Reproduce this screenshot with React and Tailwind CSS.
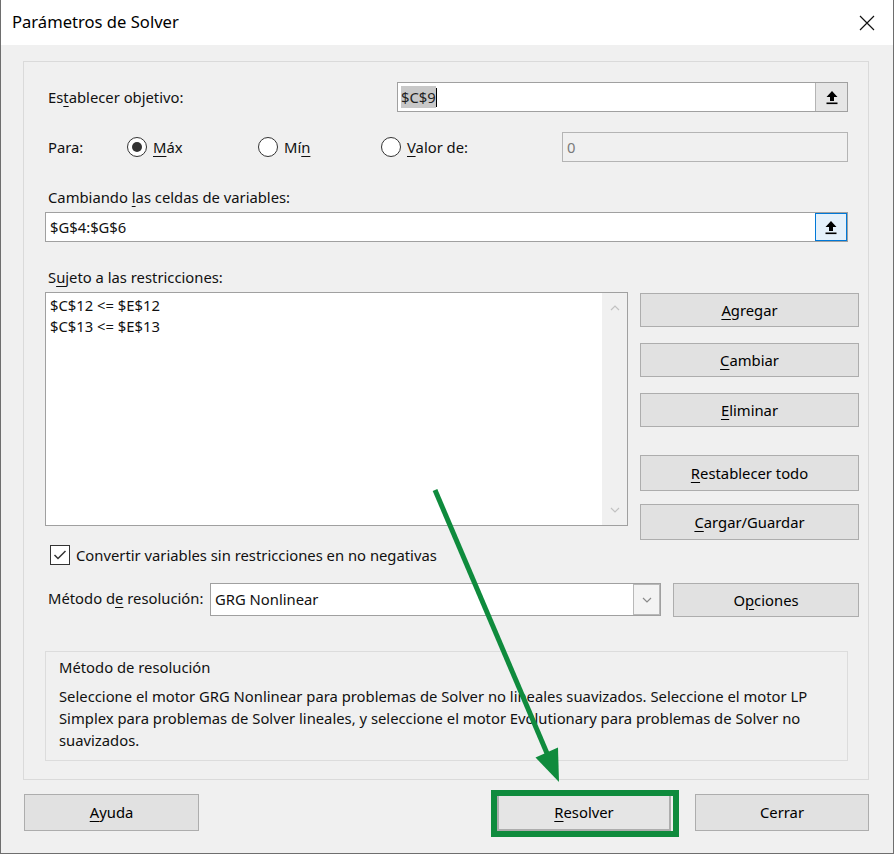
import React from "react";

function U({ children }) {
  return <span className="underline underline-offset-[3px] decoration-1">{children}</span>;
}

function Btn({ className = "", children }) {
  return (
    <div className={"shrink-0 flex items-center justify-center bg-[#e1e1e1] border border-[#adadad] text-black " + className}>
      {children}
    </div>
  );
}

function RefIcon() {
  return (
    <svg width="12" height="15" viewBox="0 0 12 15">
      <path d="M6 1 L11.5 7 L8 7 L8 11 L4 11 L4 7 L0.5 7 Z" fill="#000" />
      <rect x="0.5" y="12.5" width="11" height="1.6" fill="#000" />
    </svg>
  );
}

function Radio({ checked }) {
  return (
    <div className="shrink-0 w-[20px] h-[20px] rounded-full border-[1.5px] border-[#333] bg-white flex items-center justify-center">
      {checked && <div className="w-[10px] h-[10px] rounded-full bg-[#333]" />}
    </div>
  );
}

function Chevron({ dir = "down", color = "#9a9a9a" }) {
  return (
    <svg width="10" height="6" viewBox="0 0 10 6">
      <polyline
        points={dir === "down" ? "1,1 5,5 9,1" : "1,5 5,1 9,5"}
        fill="none"
        stroke={color}
        strokeWidth="1.2"
      />
    </svg>
  );
}

export default function App() {
  return (
    <div className="relative w-[894px] h-[854px] bg-[#f0f0f0] border-x border-b border-[#6e6e6e] font-['Noto_Sans',sans-serif] text-[14.8px] text-[#111] overflow-hidden">
      {/* title bar */}
      <div className="h-[45px] bg-white flex items-center justify-between pl-[11px] pr-[18px]">
        <span className="text-[16.6px] text-black">Parámetros de Solver</span>
        <svg width="16" height="16" viewBox="0 0 16 16">
          <path d="M1 1 L15 15 M15 1 L1 15" stroke="#111" strokeWidth="1.2" />
        </svg>
      </div>

      {/* main panel */}
      <div className="ml-[22px] mt-[16px] w-[846px] h-[719px] border border-[#dadada] pl-[21px] pt-[20px]">
        {/* objetivo */}
        <div className="flex items-center h-[30px]">
          <div className="shrink-0 w-[352px] pl-[3px]">
            <span>
              Es<U>t</U>ablecer objetivo:
            </span>
          </div>
          <div className="shrink-0 w-[451px] h-[30px] border border-[#a0a0a0] bg-white flex">
            <div className="flex-1 flex items-center pl-[3px]">
              <span className="bg-[#c8c8c8] text-[#222]">$C$9</span>
              <span className="w-[1px] h-[19px] bg-black" />
            </div>
            <div className="w-[32px] h-full bg-[#e6e6e6] border-l border-[#b4b4b4] flex items-center justify-center">
              <RefIcon />
            </div>
          </div>
        </div>

        {/* para */}
        <div className="mt-[20px] flex items-center h-[30px]">
          <div className="shrink-0 w-[82px] pl-[3px]">Para:</div>
          <div className="shrink-0 w-[131px] flex items-center gap-[6px]">
            <Radio checked />
            <span>
              <U>M</U>áx
            </span>
          </div>
          <div className="shrink-0 w-[123px] flex items-center gap-[6px]">
            <Radio />
            <span>
              Mí<U>n</U>
            </span>
          </div>
          <div className="shrink-0 w-[181px] flex items-center gap-[6px]">
            <Radio />
            <span>
              <U>V</U>alor de:
            </span>
          </div>
          <div className="shrink-0 w-[286px] h-[30px] border border-[#b4b4b4] bg-[#f0f0f0] flex items-center pl-[4px] text-[#7a7a7a]">
            0
          </div>
        </div>

        {/* cambiando */}
        <div className="mt-[25px] h-[20px] leading-[20px] pl-[3px]">
          Cambiando <U>l</U>as celdas de variables:
        </div>
        <div className="mt-[5px] w-[803px] h-[30px] border border-[#a0a0a0] bg-white flex">
          <div className="flex-1 flex items-center pl-[4px]">$G$4:$G$6</div>
          <div className="w-[32px] h-full bg-[#e5f1fb] border border-[#0078d7] flex items-center justify-center">
            <RefIcon />
          </div>
        </div>

        {/* restricciones */}
        <div className="mt-[25px] h-[20px] leading-[20px] pl-[3px]">
          S<U>u</U>jeto a las restricciones:
        </div>
        <div className="mt-[5px] flex items-start">
          <div className="shrink-0 w-[583px] h-[234px] border border-[#a0a0a0] bg-white flex">
            <div className="flex-1 pl-[4px] pt-[2px] leading-[21px]">
              <div>$C$12 &lt;= $E$12</div>
              <div>$C$13 &lt;= $E$13</div>
            </div>
            <div className="w-[25px] h-full bg-[#f0f0f0] flex flex-col items-center justify-between py-[12px]">
              <Chevron dir="up" color="#c2c2c2" />
              <Chevron dir="down" color="#c2c2c2" />
            </div>
          </div>
          <div className="shrink-0 ml-[12px] w-[219px] flex flex-col">
            <Btn className="mt-[1px] h-[34px]">
              <span>
                <U>A</U>gregar
              </span>
            </Btn>
            <Btn className="mt-[16px] h-[34px]">
              <span>
                <U>C</U>ambiar
              </span>
            </Btn>
            <Btn className="mt-[16px] h-[34px]">
              <span>
                <U>E</U>liminar
              </span>
            </Btn>
            <Btn className="mt-[28px] h-[36px]">
              <span>
                <U>R</U>establecer todo
              </span>
            </Btn>
            <Btn className="mt-[13px] h-[36px]">
              <span>
                <U>C</U>argar/Guardar
              </span>
            </Btn>
          </div>
        </div>

        {/* checkbox */}
        <div className="mt-[5px] h-[20px] flex items-center gap-[6px] pl-[5px]">
          <div className="shrink-0 w-[20px] h-[20px] border-[1.5px] border-[#333] bg-white flex items-center justify-center">
            <svg width="16" height="16" viewBox="0 0 16 16">
              <polyline points="2.5,8 6,11.5 13.5,4" fill="none" stroke="#333" strokeWidth="1.5" />
            </svg>
          </div>
          <span>Convertir variables sin restricciones en no negativas</span>
        </div>

        {/* metodo */}
        <div className="mt-[18px] flex items-start">
          <div className="shrink-0 w-[165px] pl-[3px] h-[31px] flex items-center">
            <span>
              Método d<U>e</U> resolución:
            </span>
          </div>
          <div className="shrink-0 w-[451px] h-[33px] border border-[#a0a0a0] bg-white flex">
            <div className="flex-1 flex items-center pl-[4px]">GRG Nonlinear</div>
            <div className="w-[27px] h-full bg-[#f3f3f3] border border-[#b8b8b8] flex items-center justify-center">
              <Chevron dir="down" color="#8a8a8a" />
            </div>
          </div>
          <Btn className="ml-[12px] w-[186px] h-[34px]">
            <span>
              O<U>p</U>ciones
            </span>
          </Btn>
        </div>

        {/* info */}
        <div className="mt-[34px] w-[803px] h-[110px] border border-[#dcdcdc] pl-[13px] pt-[4px]">
          <div className="leading-[22px]">Método de resolución</div>
          <div className="mt-[7px] leading-[22px] whitespace-nowrap">
            Seleccione el motor GRG Nonlinear para problemas de Solver no lineales suavizados. Seleccione el motor LP
            <br />
            Simplex para problemas de Solver lineales, y seleccione el motor Evolutionary para problemas de Solver no
            <br />
            suavizados.
          </div>
        </div>
      </div>

      {/* bottom buttons */}
      <div className="mt-[14px] flex">
        <Btn className="ml-[23px] w-[175px] h-[37px]">
          <span>
            <U>A</U>yuda
          </span>
        </Btn>
        <Btn className="ml-[298px] w-[174px] h-[37px] border-2 border-[#0078d7] bg-[#e5e5e5]">
          <span>
            <U>R</U>esolver
          </span>
        </Btn>
        <Btn className="ml-[24px] w-[174px] h-[37px]">
          <span>Cerrar</span>
        </Btn>
      </div>

      {/* green annotation overlay */}
      <div className="absolute left-[490px] top-[790px] w-[188px] h-[47px] border-[6px] border-[#0f8b3d] pointer-events-none" />
      <svg className="absolute left-0 top-0 pointer-events-none" width="894" height="854">
        <line x1="434" y1="490" x2="548" y2="758" stroke="#0f8b3d" strokeWidth="5" />
        <polygon points="558,782 557,747.5 534.5,757.5" fill="#0f8b3d" />
      </svg>
    </div>
  );
}
